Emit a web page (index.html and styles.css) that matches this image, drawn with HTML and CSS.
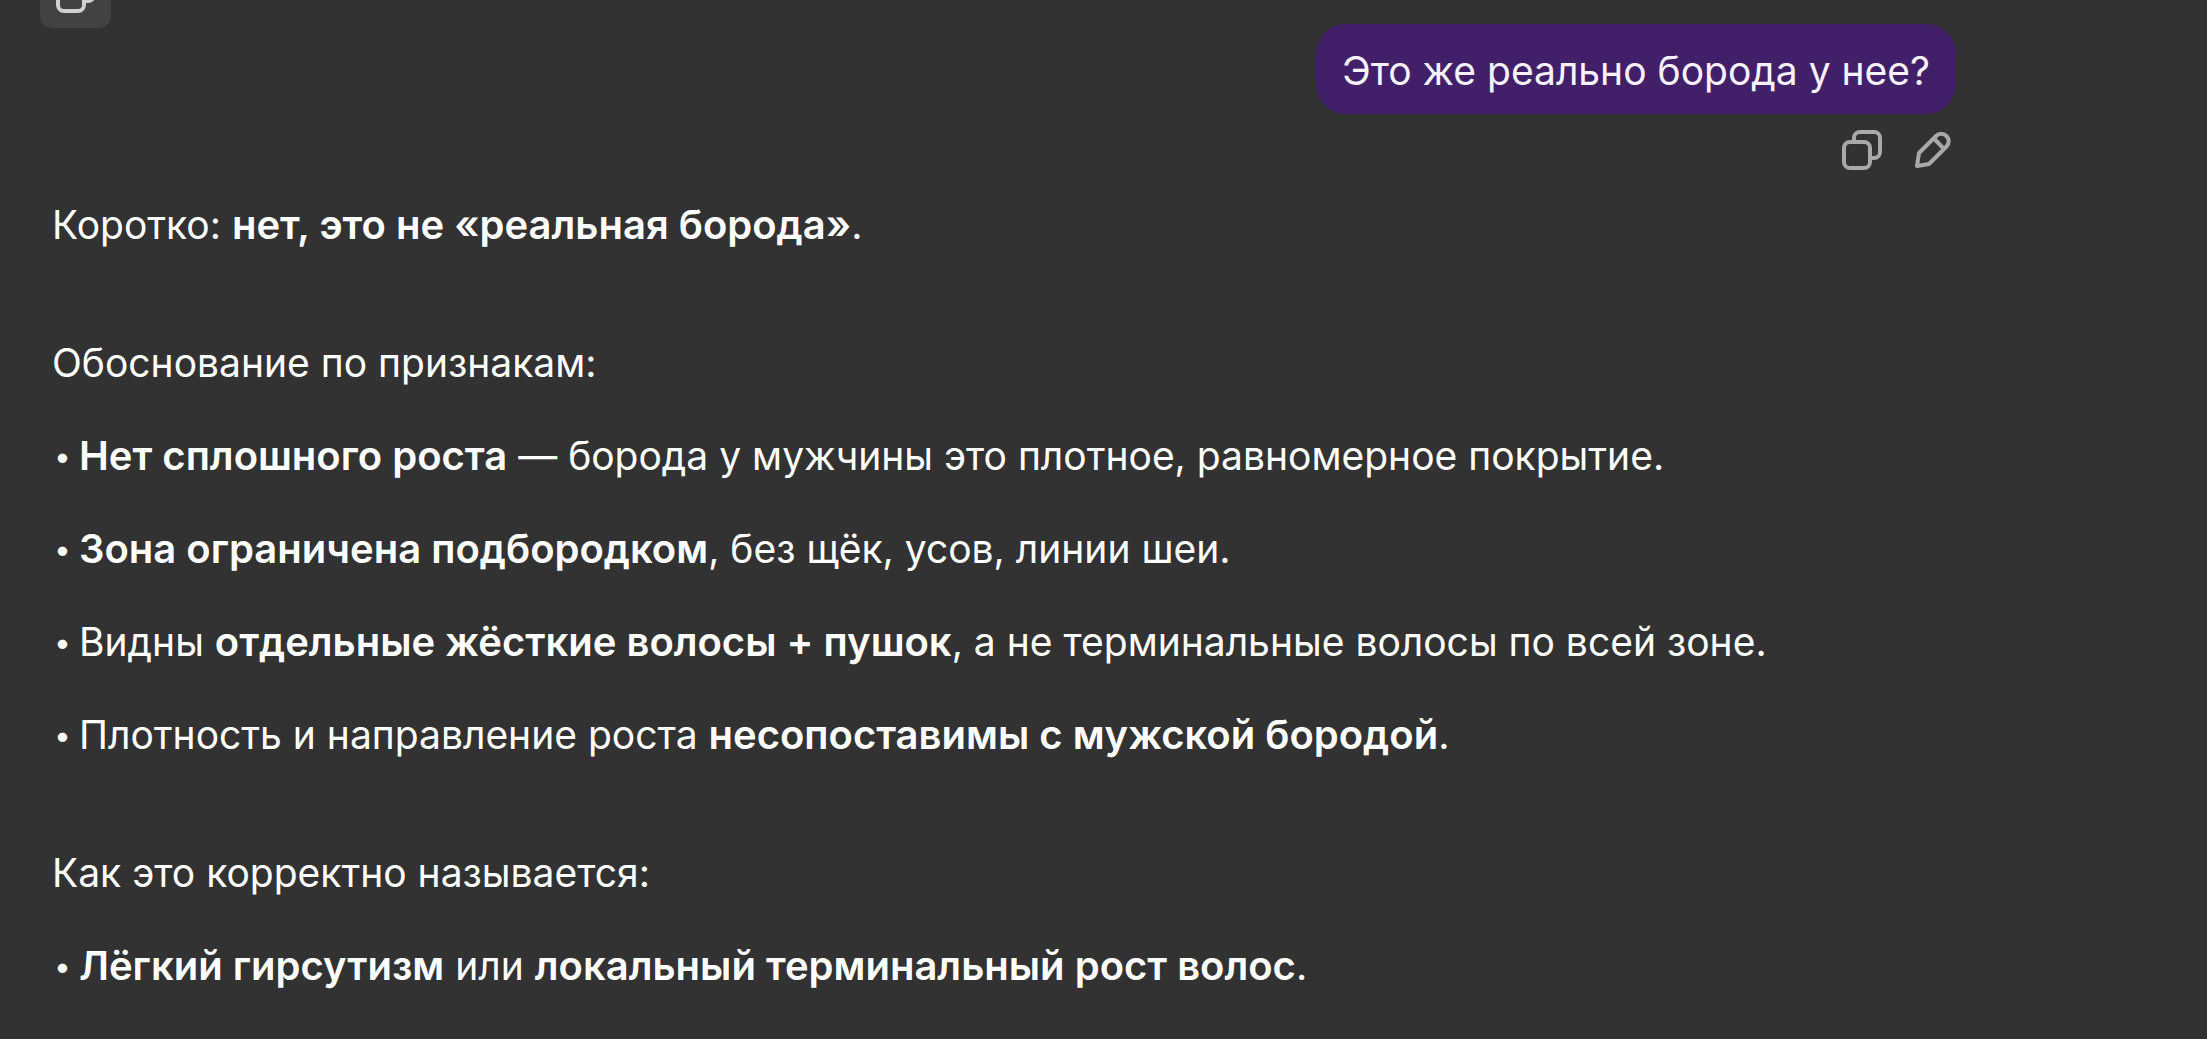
FILE: index.html
```html
<!DOCTYPE html>
<html lang="ru">
<head>
  <meta charset="UTF-8">
  <meta name="viewport" content="width=device-width, initial-scale=1.0">
  <title>Чат</title>
  <link rel="stylesheet" href="styles.css">
</head>
<body>
  <main class="chat">
    <div class="question-row">
      <button class="icon-button active" type="button" aria-label="Копировать ответ">
        <svg class="icon" viewBox="0 0 40 40">
          <rect x="2" y="12" width="26" height="26" rx="6"/>
          <path d="M12 12V8a6 6 0 0 1 6-6h14a6 6 0 0 1 6 6v14a6 6 0 0 1-6 6h-4"/>
        </svg>
      </button>
      <div class="question">
        <p class="bubble">Это же реально борода у нее?</p>
        <div class="actions">
          <button class="icon-button" type="button" aria-label="Копировать">
            <svg class="icon" viewBox="0 0 40 40">
              <rect x="2" y="12" width="26" height="26" rx="6"/>
              <path d="M12 12V8a6 6 0 0 1 6-6h14a6 6 0 0 1 6 6v14a6 6 0 0 1-6 6h-4"/>
            </svg>
          </button>
          <button class="icon-button" type="button" aria-label="Редактировать">
            <svg class="icon" viewBox="0 0 40 40">
              <path d="M4 36l2-13L23 6a7 7 0 0 1 10.500 10.500L16 34z"/>
              <path d="M21 8.500l9.500 10"/>
            </svg>
          </button>
        </div>
      </div>
    </div>

    <article class="answer">
      <p>Коротко: <strong>нет, это не «реальная борода»</strong>.</p>
      <section class="block">
        <p>Обоснование по признакам:</p>
        <ul class="list">
          <li><strong>Нет сплошного роста</strong> — борода у мужчины это плотное, равномерное покрытие.</li>
          <li><strong>Зона ограничена подбородком</strong>, без щёк, усов, линии шеи.</li>
          <li>Видны <strong>отдельные жёсткие волосы + пушок</strong>, а не терминальные волосы по всей зоне.</li>
          <li>Плотность и направление роста <strong>несопоставимы с мужской бородой</strong>.</li>
        </ul>
      </section>
      <section class="block">
        <p>Как это корректно называется:</p>
        <ul class="list">
          <li><strong>Лёгкий гирсутизм</strong> или <strong>локальный терминальный рост волос</strong>.</li>
        </ul>
      </section>
    </article>
  </main>
</body>
</html>
```
FILE: styles.css
```css
* {
  box-sizing: border-box;
}
body {
  margin: 0;
  min-height: 100vh;
  overflow: hidden;
  background-color: #323232;
  color: #ffffff;
  font-family: Inter, "Liberation Sans", sans-serif;
  font-size: 39px;
  font-weight: 420;
  line-height: 53px;
}
p,
ul {
  margin: 0;
  padding: 0;
}
strong {
  font-size: 40px;
  font-weight: 600;
}
.chat {
  display: flex;
  flex-direction: column;
}
.question-row {
  display: flex;
  justify-content: space-between;
  align-items: flex-start;
  padding: 0 239px 0 40px;
}
.question {
  display: flex;
  flex-direction: column;
  align-items: flex-end;
  padding-top: 24px;
}
.bubble {
  margin-right: 12px;
  padding: 20px 26px 17px;
  border-radius: 30px;
  background-color: #412069;
  color: #f8f2ff;
}
.actions {
  display: flex;
}
.icon-button {
  display: flex;
  justify-content: center;
  align-items: center;
  width: 71px;
  height: 71px;
  padding: 0;
  border: none;
  border-radius: 12px;
  background: none;
  color: #a9a9a9;
  cursor: pointer;
}
/* scrolled partly out of view */
.icon-button.active {
  margin-top: -43px;
  background-color: #424242;
  color: #cfcfcf;
}
.icon {
  width: 40px;
  height: 40px;
  fill: none;
  stroke: currentColor;
  stroke-width: 4;
  stroke-linecap: round;
  stroke-linejoin: round;
}
.answer {
  display: flex;
  flex-direction: column;
  gap: 85px;
  padding: 13px 52px 0;
}
.block,
.list {
  display: flex;
  flex-direction: column;
  gap: 40px;
}
.list {
  list-style: none;
}
.list li::before {
  content: "•";
  display: inline-block;
  width: 25px;
  padding-left: 2px;
  font-size: 30px;
  line-height: 30px;
  vertical-align: 3px;
}
```
